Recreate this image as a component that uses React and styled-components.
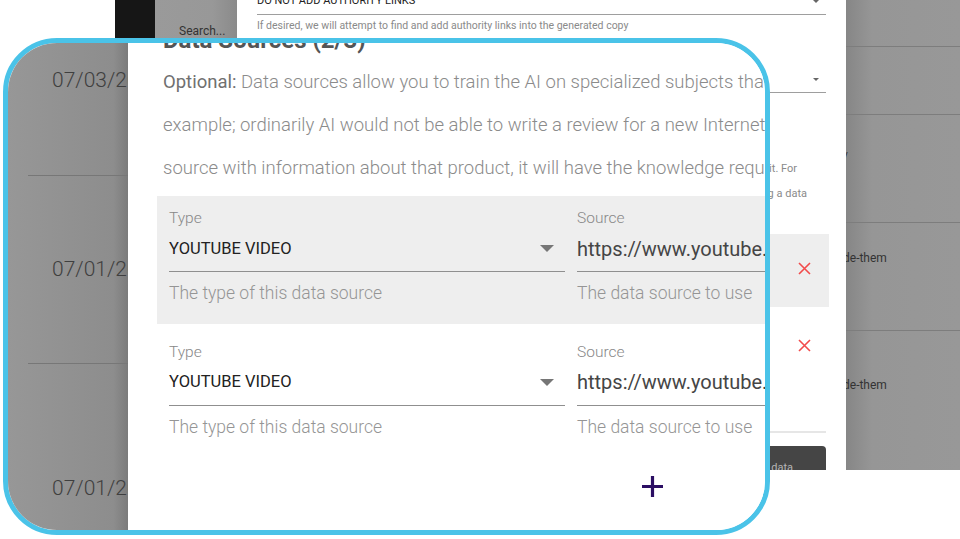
import React from "react";
import styled, { createGlobalStyle } from "styled-components";

const Global = createGlobalStyle`
  html, body { margin: 0; padding: 0; background: #fff; }
  body {
    width: 960px; height: 539px; overflow: hidden;
    font-family: Roboto, "Liberation Sans", Arial, sans-serif;
  }
  * { box-sizing: border-box; }
`;

const Stage = styled.div`
  position: relative;
  width: 960px;
  height: 539px;
  background: #fff;
  overflow: hidden;
`;

/* ---------- background (unmagnified) page ---------- */
const Screen = styled.div`
  display: flex;
  width: 960px;
  height: 470px;
`;
const Gutter = styled.div`
  width: 115px;
  flex-shrink: 0;
  background: #fff;
`;
const NavStrip = styled.div`
  width: 40px;
  flex-shrink: 0;
  background: #161616;
`;
const SideShade = styled.div`
  width: 82px;
  flex-shrink: 0;
  background: linear-gradient(to right, #9a9a9a, #989898 70%, #8a8a8a);
  padding: 23px 0 0 24px;
  font-size: 12px;
  line-height: 16px;
  color: #333;
  white-space: nowrap;
`;
const Modal = styled.div`
  width: 609px;
  flex-shrink: 0;
  background: #fff;
  padding: 0 20px;
  display: flex;
  flex-direction: column;
  overflow: hidden;
  & > * { flex-shrink: 0; }
`;
const SmallSelect = styled.div`
  display: flex;
  align-items: center;
  justify-content: space-between;
  margin-top: ${(p) => p.$top}px;
  height: 22px;
  padding: 0 7px 5px 0;
  border-bottom: 1px solid #9e9e9e;
  font-size: 11px;
  line-height: 16px;
  color: #222;
`;
const SmallArrow = styled.span`
  width: 0;
  height: 0;
  border-left: 3.5px solid transparent;
  border-right: 3.5px solid transparent;
  border-top: 3.5px solid #666;
`;
const SmallHelper = styled.div`
  margin-top: 4px;
  font-size: 10.5px;
  line-height: 14px;
  color: #8a8a8a;
  white-space: nowrap;
`;
const BgPara = styled.div`
  margin-top: 37.5px;
  display: flex;
  flex-direction: column;
  font-size: 11px;
  line-height: 25px;
  color: #8a8a8a;
`;
const BgLine = styled.div`
  display: flex;
  justify-content: flex-end;
  padding-right: ${(p) => p.$end}px;
  white-space: nowrap;
  overflow: hidden;
`;
const BgRow = styled.div`
  margin-top: ${(p) => p.$top}px;
  margin-right: -3px;
  height: 73px;
  background: ${(p) => (p.$shaded ? "#eeeeee" : "#fff")};
  display: flex;
  justify-content: flex-end;
  align-items: center;
`;
const XCell = styled.div`
  width: 50px;
  display: flex;
  justify-content: center;
  align-items: center;
  padding-bottom: 4px;
`;
const Divider = styled.div`
  margin-top: 47px;
  height: 1.5px;
  background: #e6e6e6;
`;
const DarkButton = styled.div`
  margin-top: 13px;
  align-self: flex-end;
  width: 170px;
  height: 40px;
  background: #454545;
  border-radius: 4px 4px 0 0;
  display: flex;
  justify-content: flex-end;
  padding: 15px 33px 0 0;
  font-size: 11px;
  line-height: 14px;
  color: #b5b5b5;
  white-space: nowrap;
`;
const Backdrop = styled.div`
  flex: 1;
  background: linear-gradient(to right, #868686, #969696 26px, #989898);
  display: flex;
  flex-direction: column;
  overflow: hidden;
`;
const BackRow = styled.div`
  flex-shrink: 0;
  height: ${(p) => p.$h}px;
  border-bottom: ${(p) => (p.$line ? "1.5px solid #7d7d7d" : "none")};
  padding-top: ${(p) => p.$pad}px;
  margin-left: -3px;
  font-size: 12px;
  line-height: 16px;
  color: #333;
  white-space: nowrap;
`;

/* ---------- magnifier lens ---------- */
const Lens = styled.div`
  position: absolute;
  left: 3px;
  top: 38px;
  width: 767px;
  height: 497px;
  border: 5px solid #4ac3e8;
  border-radius: 54px;
  overflow: hidden;
  background: #fff;
  display: flex;
`;
const LensShade = styled.div`
  width: 120px;
  flex-shrink: 0;
  background: linear-gradient(to right, #979797, #8d8d8d 88%, #7b7b7b);
  display: flex;
  flex-direction: column;
  overflow: hidden;
`;
const DateRow = styled.div`
  flex-shrink: 0;
  margin-left: 20px;
  height: ${(p) => p.$h}px;
  border-bottom: ${(p) => (p.$line ? "1.5px solid #777" : "none")};
  padding: ${(p) => p.$pad}px 0 0 24px;
  font-size: 21px;
  line-height: 26px;
  font-weight: 300;
  color: #3f3f3f;
  white-space: nowrap;
`;
const LensModal = styled.div`
  flex: 1;
  min-width: 0;
  background: #fff;
  padding-left: 29px;
  display: flex;
  flex-direction: column;
  overflow: hidden;
  & > * { flex-shrink: 0; }
`;
const Title = styled.div`
  margin-top: -19px;
  padding-left: 6px;
  font-size: 24px;
  line-height: 32px;
  font-weight: 700;
  color: #555;
  white-space: nowrap;
`;
const Para = styled.div`
  margin-top: 4.5px;
  padding-left: 6px;
  display: flex;
  flex-direction: column;
  font-size: 18.5px;
  line-height: 43px;
  font-weight: 300;
  color: #8b8b8b;
  white-space: nowrap;
`;
const Strong = styled.span`
  font-weight: 400;
  color: #707070;
`;
const Rows = styled.div`
  margin-top: 6.5px;
  display: flex;
  flex-direction: column;
  gap: 6px;
`;
const DataRow = styled.div`
  align-self: flex-start;
  width: 1000px;
  flex-shrink: 0;
  display: flex;
  gap: 12px;
  padding: 12px 0 19.5px 12px;
  background: ${(p) => (p.$shaded ? "#eeeeee" : "#fff")};
`;
const Field = styled.div`
  width: 396px;
  flex-shrink: 0;
  display: flex;
  flex-direction: column;
`;
const FieldLabel = styled.div`
  font-size: 15.5px;
  line-height: 20px;
  font-weight: 300;
  color: #888;
`;
const FieldInput = styled.div`
  margin-top: 8.5px;
  display: flex;
  align-items: center;
  justify-content: space-between;
  padding-bottom: 10.5px;
  border-bottom: 1.5px solid #8f8f8f;
  line-height: 24px;
  white-space: nowrap;
`;
const Value = styled.span`
  font-size: ${(p) => p.$size}px;
  color: ${(p) => p.$color};
`;
const Arrow = styled.span`
  margin-right: 11px;
  width: 0;
  height: 0;
  border-left: 7px solid transparent;
  border-right: 7px solid transparent;
  border-top: 7px solid #767676;
`;
const FieldHelper = styled.div`
  margin-top: 10px;
  font-size: 17.5px;
  line-height: 22px;
  font-weight: 300;
  color: #959595;
  white-space: nowrap;
`;
const PlusRow = styled.div`
  margin-top: 19px;
  padding-left: 485px;
  display: flex;
`;

const RedX = () => (
  <svg width="13" height="13" viewBox="0 0 13 13">
    <path d="M1 1 L12 12 M12 1 L1 12" stroke="#f24b4b" strokeWidth="1.6" fill="none" />
  </svg>
);

const Plus = () => (
  <svg width="21" height="21" viewBox="0 0 21 21">
    <path d="M10.5 0 V21 M0 10.5 H21" stroke="#2b0e63" strokeWidth="3.2" fill="none" />
  </svg>
);

const SourceRow = ({ shaded }) => (
  <DataRow $shaded={shaded}>
    <Field>
      <FieldLabel>Type</FieldLabel>
      <FieldInput>
        <Value $size={16.5} $color="#222">YOUTUBE VIDEO</Value>
        <Arrow />
      </FieldInput>
      <FieldHelper>The type of this data source</FieldHelper>
    </Field>
    <Field>
      <FieldLabel>Source</FieldLabel>
      <FieldInput>
        <Value $size={20} $color="#454545">https://www.youtube.com/watch?v=dQw4w9WgXcQ</Value>
      </FieldInput>
      <FieldHelper>The data source to use</FieldHelper>
    </Field>
  </DataRow>
);

export default function App() {
  return (
    <Stage>
      <Global />
      <Screen>
        <Gutter />
        <NavStrip />
        <SideShade>Search...</SideShade>
        <Modal>
          <SmallSelect $top={-7}>
            <span>DO NOT ADD AUTHORITY LINKS</span>
            <SmallArrow />
          </SmallSelect>
          <SmallHelper>If desired, we will attempt to find and add authority links into the generated copy</SmallHelper>
          <SmallSelect $top={38}>
            <span>DEFAULT</span>
            <SmallArrow />
          </SmallSelect>
          <BgPara>
            <BgLine $end={70}>Optional: Data sources allow you to train the AI on specialized subjects that it may not</BgLine>
            <BgLine $end={29}>know about, it will have the knowledge required to write about it. For</BgLine>
            <BgLine $end={19}>example, you can give it a product page by adding a data</BgLine>
          </BgPara>
          <BgRow $top={28.5} $shaded>
            <XCell><RedX /></XCell>
          </BgRow>
          <BgRow $top={4}>
            <XCell><RedX /></XCell>
          </BgRow>
          <Divider />
          <DarkButton>Train on data</DarkButton>
        </Modal>
        <Backdrop>
          <BackRow $h={46.5} $line />
          <BackRow $h={68} $line />
          <BackRow $h={108.5} $line $pad={34.5}>/</BackRow>
          <BackRow $h={108} $line $pad={26.5}>de-them</BackRow>
          <BackRow $h={140} $pad={45.5}>de-them</BackRow>
        </Backdrop>
      </Screen>

      <Lens>
        <LensShade>
          <DateRow $h={132.5} $line $pad={24}>07/03/2023</DateRow>
          <DateRow $h={188} $line $pad={80.5}>07/01/2023</DateRow>
          <DateRow $h={200} $pad={111.5}>07/01/2023</DateRow>
        </LensShade>
        <LensModal>
          <Title>Data Sources (2/3)</Title>
          <Para>
            <span>
              <Strong>Optional:</Strong> Data sources allow you to train the AI on specialized subjects that it may not know about. For
            </span>
            <span>example; ordinarily AI would not be able to write a review for a new Internet product, but by adding a data</span>
            <span>source with information about that product, it will have the knowledge required to write about it.</span>
          </Para>
          <Rows>
            <SourceRow shaded />
            <SourceRow />
          </Rows>
          <PlusRow>
            <Plus />
          </PlusRow>
        </LensModal>
      </Lens>
    </Stage>
  );
}
